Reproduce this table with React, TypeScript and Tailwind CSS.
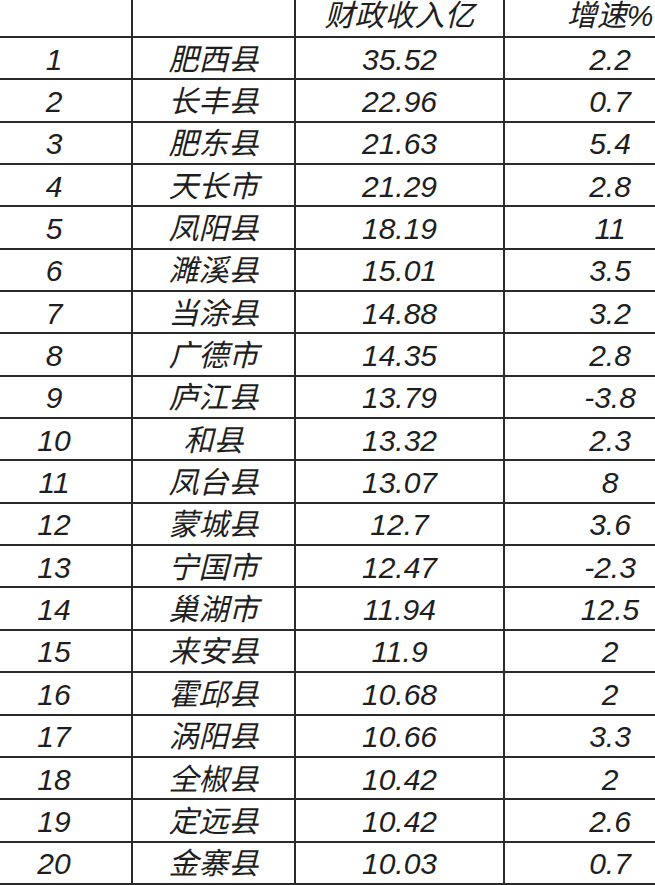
const ROWS: [string, string, string, string][] = [
  ['1', '肥西县', '35.52', '2.2'],
  ['2', '长丰县', '22.96', '0.7'],
  ['3', '肥东县', '21.63', '5.4'],
  ['4', '天长市', '21.29', '2.8'],
  ['5', '凤阳县', '18.19', '11'],
  ['6', '濉溪县', '15.01', '3.5'],
  ['7', '当涂县', '14.88', '3.2'],
  ['8', '广德市', '14.35', '2.8'],
  ['9', '庐江县', '13.79', '-3.8'],
  ['10', '和县', '13.32', '2.3'],
  ['11', '凤台县', '13.07', '8'],
  ['12', '蒙城县', '12.7', '3.6'],
  ['13', '宁国市', '12.47', '-2.3'],
  ['14', '巢湖市', '11.94', '12.5'],
  ['15', '来安县', '11.9', '2'],
  ['16', '霍邱县', '10.68', '2'],
  ['17', '涡阳县', '10.66', '3.3'],
  ['18', '全椒县', '10.42', '2'],
  ['19', '定远县', '10.42', '2.6'],
  ['20', '金寨县', '10.03', '0.7'],
];

// table is wider than the shot: left and right edges are cropped
const COLS = ['w-[156px]', 'w-[163px]', 'w-[209px]', 'w-[210px]'];

function Row({ cells, header }: { cells: string[]; header?: boolean }) {
  return (
    <div
      className={`flex border-b-2 border-[#2a2a2a] ${header ? 'h-[38px]' : 'h-[42.35px]'}`}
    >
      {cells.map((c, i) => (
        <div
          key={i}
          className={`${COLS[i]} shrink-0 flex items-center justify-center ${
            i < 3 ? 'border-r-2 border-[#2a2a2a]' : ''
          } ${header ? 'pb-[4px]' : 'pt-[3px]'}`}
        >
          {c}
        </div>
      ))}
    </div>
  );
}

export default function App() {
  return (
    <div className="w-[655px] h-[885px] overflow-hidden bg-white">
      <div
        className="-ml-[23px] w-[738px] italic text-[30px] leading-none text-[#1e1e1e] whitespace-nowrap"
        style={{ fontFamily: '"Liberation Sans", "Noto Sans CJK SC", sans-serif' }}
      >
        <Row header cells={['', '', '财政收入亿', '增速%']} />
        {ROWS.map((r) => (
          <Row key={r[0]} cells={r} />
        ))}
      </div>
    </div>
  );
}
